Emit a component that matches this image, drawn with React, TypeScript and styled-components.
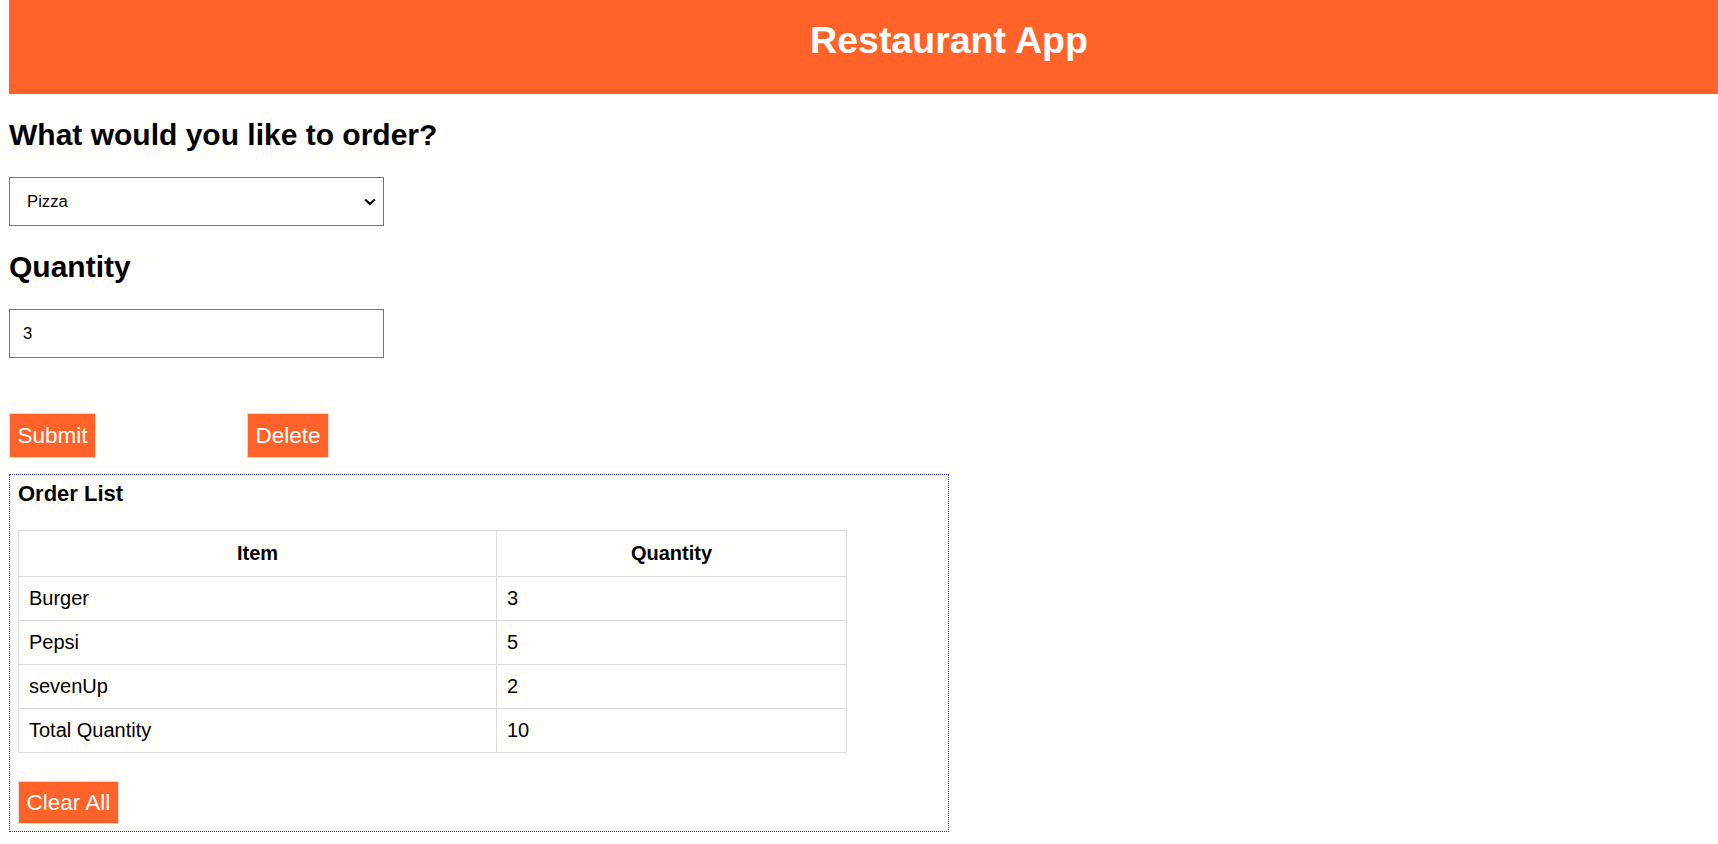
import React from "react";
import styled, { createGlobalStyle } from "styled-components";

const GlobalStyle = createGlobalStyle`
  html, body {
    background: #fffefb;
  }
  body {
    margin: 0 0 0 9px;
    font-family: "Liberation Sans", Arial, sans-serif;
    color: #000;
  }
`;

const Header = styled.header`
  background: #ff632a;
  height: 94px;
  box-sizing: border-box;
  padding: 19px 0 0 171px;
  text-align: center;
`;

const Title = styled.h1`
  margin: 0;
  font-size: 37.5px;
  font-weight: 700;
  color: #fff;
  line-height: normal;
`;

const Heading = styled.h2`
  margin: 24px 0 25px;
  font-size: 30px;
  font-weight: 700;
  line-height: normal;
`;

const SelectWrap = styled.div`
  position: relative;
  width: 375px;
  height: 49px;
`;

const Select = styled.select`
  display: block;
  width: 100%;
  height: 100%;
  box-sizing: border-box;
  padding: 0 30px 0 17px;
  border: 1px solid #767676;
  border-radius: 0;
  background: #fffefb;
  font-family: "Liberation Sans", Arial, sans-serif;
  font-size: 16.7px;
  color: #000;
  appearance: none;
  -webkit-appearance: none;
`;

const Chevron = styled.svg`
  position: absolute;
  right: 8px;
  top: 21px;
  width: 12px;
  height: 8px;
  pointer-events: none;
`;

const Input = styled.input`
  display: block;
  width: 375px;
  height: 49px;
  box-sizing: border-box;
  padding: 0 13px;
  border: 1px solid #767676;
  border-radius: 0;
  background: #fffefb;
  font-family: "Liberation Sans", Arial, sans-serif;
  font-size: 16.7px;
  color: #000;
`;

const ButtonRow = styled.div`
  display: flex;
  align-items: flex-start;
  margin-top: 55px;
  margin-bottom: 16px;
`;

const Button = styled.button<{ $offset?: number; $padY?: number }>`
  background: #ff632a;
  color: #fff;
  border: 1px solid #dcdcdc;
  border-radius: 0;
  padding: ${(p) => p.$padY ?? 8.5}px 7.5px;
  margin: 0 0 0 ${(p) => p.$offset ?? 0}px;
  font-family: "Liberation Sans", Arial, sans-serif;
  font-size: 22.5px;
  line-height: normal;
  cursor: pointer;
`;

const OrderBox = styled.section`
  width: 940px;
  box-sizing: border-box;
  border: 1px dotted #2a2ae0;
  padding: 6px 8px 7px;
`;

const BoxTitle = styled.h3`
  margin: 0 0 23px;
  font-size: 22px;
  font-weight: 700;
  line-height: normal;
`;

const Table = styled.table`
  border-collapse: collapse;
  width: 829px;
  margin-bottom: 28px;
  font-size: 20px;
`;

const Th = styled.th<{ $w?: number }>`
  border: 1px solid #dcdcdc;
  padding: 11px 10px;
  font-weight: 700;
  text-align: center;
  line-height: normal;
  ${(p) => (p.$w ? `width: ${p.$w}px;` : "")}
`;

const Td = styled.td`
  border: 1px solid #dcdcdc;
  padding: 10px;
  text-align: left;
  line-height: normal;
`;

const orders = [
  { item: "Burger", qty: 3 },
  { item: "Pepsi", qty: 5 },
  { item: "sevenUp", qty: 2 },
];

export default function App() {
  const total = orders.reduce((s, o) => s + o.qty, 0);
  return (
    <>
      <GlobalStyle />
      <Header>
        <Title>Restaurant App</Title>
      </Header>
      <Heading>What would you like to order?</Heading>
      <SelectWrap>
        <Select defaultValue="Pizza">
          <option>Pizza</option>
          <option>Burger</option>
          <option>Pepsi</option>
          <option>sevenUp</option>
        </Select>
        <Chevron viewBox="0 0 12 8">
          <path d="M1.2 1.5 L6 6 L10.8 1.5" fill="none" stroke="#000" strokeWidth="2.2" />
        </Chevron>
      </SelectWrap>
      <Heading>Quantity</Heading>
      <Input type="text" defaultValue="3" />
      <ButtonRow>
        <Button>Submit</Button>
        <Button $offset={151}>Delete</Button>
      </ButtonRow>
      <OrderBox>
        <BoxTitle>Order List</BoxTitle>
        <Table>
          <thead>
            <tr>
              <Th $w={457}>Item</Th>
              <Th>Quantity</Th>
            </tr>
          </thead>
          <tbody>
            {orders.map((o) => (
              <tr key={o.item}>
                <Td>{o.item}</Td>
                <Td>{o.qty}</Td>
              </tr>
            ))}
            <tr>
              <Td>Total Quantity</Td>
              <Td>{total}</Td>
            </tr>
          </tbody>
        </Table>
        <Button $padY={7.5}>Clear All</Button>
      </OrderBox>
    </>
  );
}
